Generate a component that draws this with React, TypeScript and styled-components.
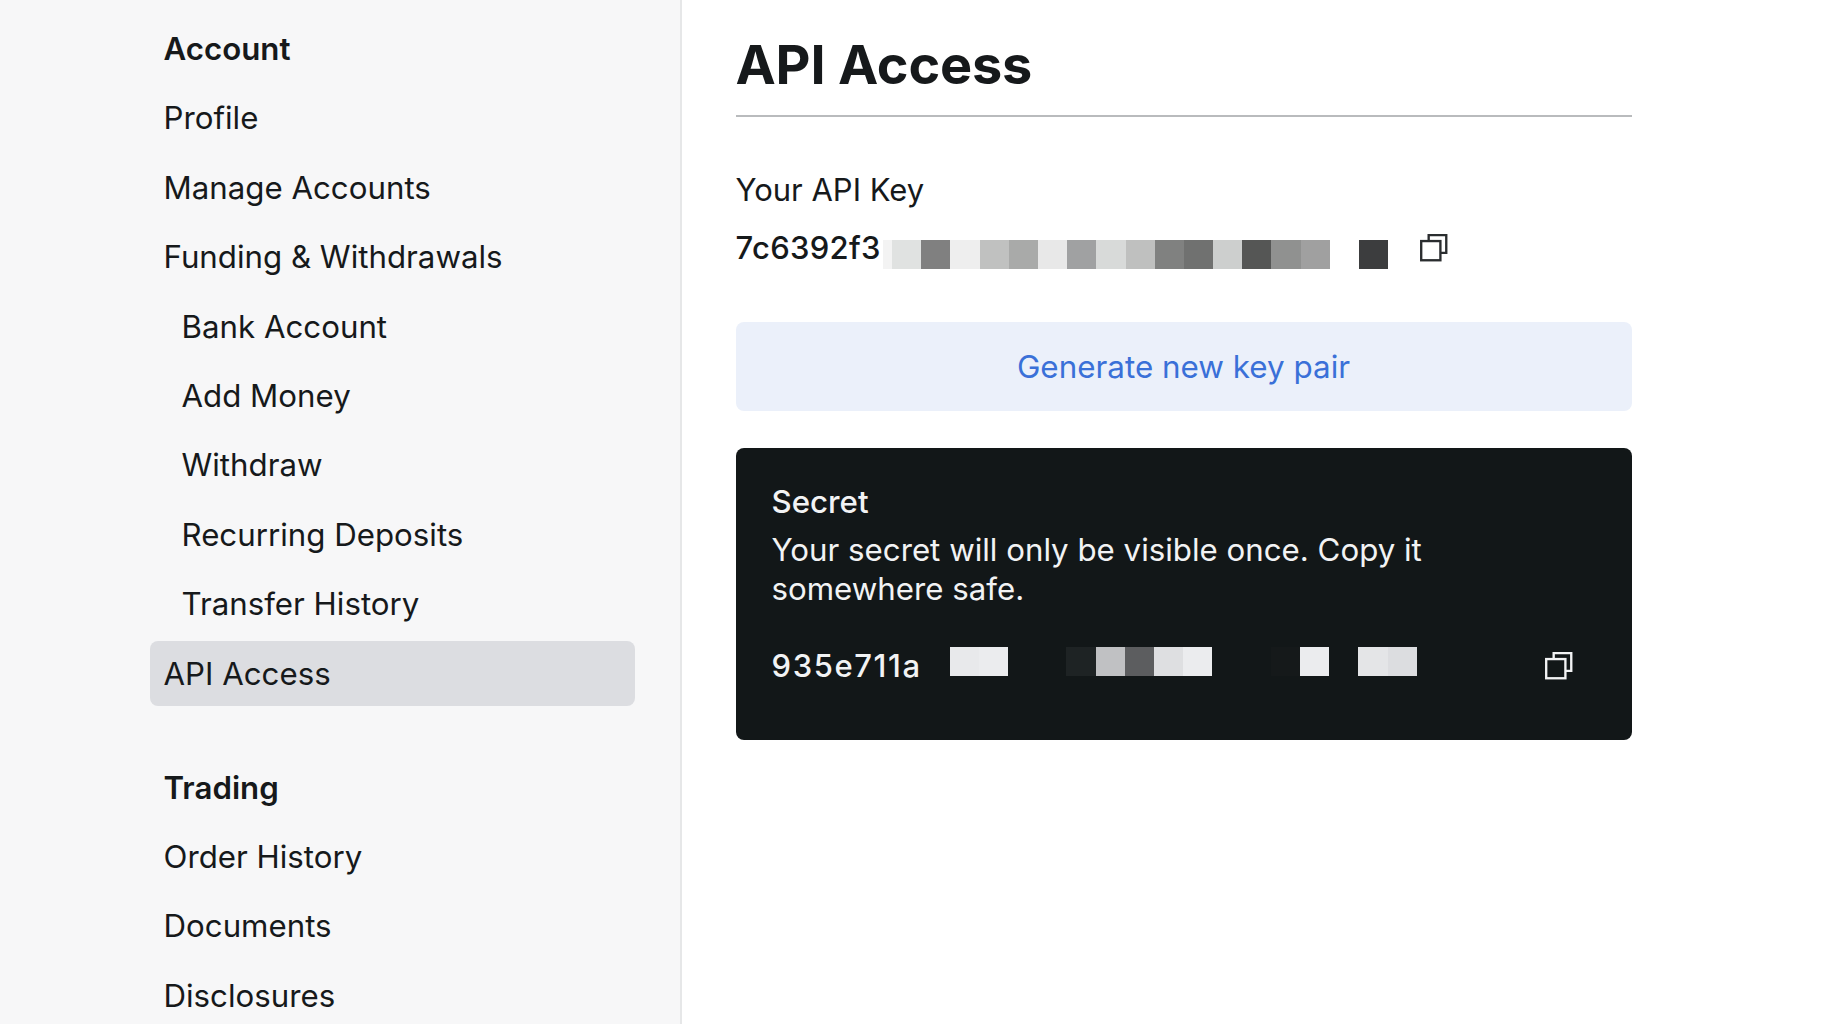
import React from 'react'
import styled, { createGlobalStyle } from 'styled-components'

const GlobalStyle = createGlobalStyle`
  html, body {
    margin: 0;
    height: 100%;
    background: #fff;
    overflow: hidden;
  }
  body {
    font-family: Inter, "Liberation Sans", sans-serif;
    color: #16191b;
  }
`

const Page = styled.div`
  display: flex;
  width: 1828px;
  height: 1024px;
  overflow: hidden;
`

const Sidebar = styled.aside`
  box-sizing: border-box;
  width: 682px;
  flex-shrink: 0;
  height: 1024px;
  overflow: hidden;
  padding: 16px 0 0 150px;
  background: #f7f7f8;
  border-right: 2px solid #e6e7e8;
`

const Nav = styled.nav`
  display: flex;
  flex-direction: column;
  width: 484.5px;
  gap: 4.4px;
`

const NavHeading = styled.div<{ $spaced?: boolean }>`
  height: 65px;
  line-height: 67px;
  padding-left: 13.5px;
  font-size: 31.25px;
  font-weight: 600;
  margin-top: ${p => (p.$spaced ? '44.6px' : '0')};
`

const NavItem = styled.div<{ $sub?: boolean; $active?: boolean }>`
  height: 65px;
  line-height: 67px;
  padding-left: ${p => (p.$sub ? '31.5px' : '13.5px')};
  font-size: 31.25px;
  font-weight: 400;
  border-radius: 8px;
  background: ${p => (p.$active ? '#dcdde1' : 'transparent')};
`

const Main = styled.main`
  box-sizing: border-box;
  width: 896px;
  margin-left: 53.5px;
  padding-top: 29px;
  display: flex;
  flex-direction: column;
`

const Title = styled.h1`
  margin: 0;
  font-size: 54px;
  line-height: 72px;
  font-weight: 700;
  letter-spacing: -0.2px;
  padding-bottom: 14px;
  border-bottom: 2px solid #b9bbbd;
`

const KeyLabel = styled.div`
  margin-top: 53px;
  font-size: 31px;
  line-height: 40px;
`

const KeyRow = styled.div`
  display: flex;
  align-items: center;
  margin-top: 16px;
  height: 44px;
`

const KeyText = styled.span<{ $light?: boolean }>`
  font-size: 31px;
  line-height: 44px;
  font-weight: 500;
  letter-spacing: ${p => (p.$light ? '1.6px' : '0.3px')};
  color: ${p => (p.$light ? '#f2f3f4' : '#16191b')};
`

const Mosaic = styled.div<{ $gap: number; $top: number }>`
  display: flex;
  margin-left: ${p => p.$gap}px;
  margin-top: ${p => p.$top}px;
`

const Tile = styled.span<{ $color: string; $w: number }>`
  display: block;
  width: ${p => p.$w}px;
  height: 29px;
  background: ${p => p.$color};
`

const CopyIcon = styled.svg<{ $left: number }>`
  display: block;
  width: 32px;
  height: 32px;
  margin-left: ${p => p.$left}px;
  flex-shrink: 0;
`

const GenerateButton = styled.button`
  margin-top: 52px;
  height: 89px;
  border: 0;
  border-radius: 8px;
  background: #ebf0fa;
  color: #3a70d8;
  font-family: inherit;
  font-size: 31.4px;
  font-weight: 400;
`

const SecretCard = styled.section`
  box-sizing: border-box;
  margin-top: 37px;
  height: 292px;
  padding: 34px 36px 0;
  border-radius: 8px;
  background: #121718;
  color: #f2f3f4;
`

const SecretTitle = styled.div`
  font-size: 31.25px;
  line-height: 40px;
  font-weight: 500;
`

const SecretText = styled.p`
  margin: 9px 0 0;
  width: 720px;
  font-size: 31.25px;
  line-height: 39px;
`

const SecretRow = styled.div`
  display: flex;
  align-items: center;
  margin-top: 35px;
  height: 44px;
`

const apiTiles: [string, number][] = [
  ['#f3f3f3', 9],
  ['#e0e2e1', 29],
  ['#808080', 29.2],
  ['#eeeeee', 29.2],
  ['#c0c1c0', 29.2],
  ['#a9aaa9', 29.2],
  ['#e8e8e8', 29.2],
  ['#a0a1a2', 29.2],
  ['#d8dad9', 29.2],
  ['#bfc0bf', 29.2],
  ['#808180', 29.2],
  ['#707170', 29.2],
  ['#cdcfce', 29.2],
  ['#555655', 29.2],
  ['#909190', 29.2],
  ['#a0a0a0', 29.2],
  ['#ffffff', 29.2],
  ['#3c3d3e', 29.2]
]

const secretTiles: [string, number][] = [
  ['#e8e9eb', 29.2],
  ['#ebecee', 29.2],
  ['#121718', 29.2],
  ['#121718', 29.2],
  ['#1e2324', 29.2],
  ['#c0c1c3', 29.2],
  ['#5c5d5f', 29.2],
  ['#dedfe1', 29.2],
  ['#ebecee', 29.2],
  ['#121718', 29.2],
  ['#121718', 29.2],
  ['#15191a', 29.2],
  ['#ebecee', 29.2],
  ['#121718', 29.2],
  ['#e4e5e7', 29.2],
  ['#dcdde0', 29.2]
]

const Copy: React.FC<{ left: number; color: string }> = ({ left, color }) => (
  <CopyIcon $left={left} viewBox="0 0 30 30" fill="none" stroke={color} strokeWidth="2.2">
    <path d="M10 8.5V3h16.5v16.5H21" />
    <rect x="3" y="8.5" width="18" height="18" />
  </CopyIcon>
)

const App: React.FC = () => {
  return (
    <>
      <GlobalStyle />
      <Page>
        <Sidebar>
          <Nav>
            <NavHeading>Account</NavHeading>
            <NavItem>Profile</NavItem>
            <NavItem>Manage Accounts</NavItem>
            <NavItem>Funding &amp; Withdrawals</NavItem>
            <NavItem $sub>Bank Account</NavItem>
            <NavItem $sub>Add Money</NavItem>
            <NavItem $sub>Withdraw</NavItem>
            <NavItem $sub>Recurring Deposits</NavItem>
            <NavItem $sub>Transfer History</NavItem>
            <NavItem $active>API Access</NavItem>
            <NavHeading $spaced>Trading</NavHeading>
            <NavItem>Order History</NavItem>
            <NavItem>Documents</NavItem>
            <NavItem>Disclosures</NavItem>
          </Nav>
        </Sidebar>
        <Main>
          <Title>API Access</Title>
          <KeyLabel>Your API Key</KeyLabel>
          <KeyRow>
            <KeyText>7c6392f3</KeyText>
            <Mosaic $gap={2.5} $top={12}>
              {apiTiles.map(([c, w], i) => (
                <Tile key={i} $color={c} $w={w} />
              ))}
            </Mosaic>
            <Copy left={30} color="#2a2d2f" />
          </KeyRow>
          <GenerateButton>Generate new key pair</GenerateButton>
          <SecretCard>
            <SecretTitle>Secret</SecretTitle>
            <SecretText>Your secret will only be visible once. Copy it somewhere safe.</SecretText>
            <SecretRow>
              <KeyText $light>935e711a</KeyText>
              <Mosaic $gap={28} $top={-8.6}>
                {secretTiles.map(([c, w], i) => (
                  <Tile key={i} $color={c} $w={w} />
                ))}
              </Mosaic>
              <Copy left={126} color="#f2f3f4" />
            </SecretRow>
          </SecretCard>
        </Main>
      </Page>
    </>
  )
}

export default App
